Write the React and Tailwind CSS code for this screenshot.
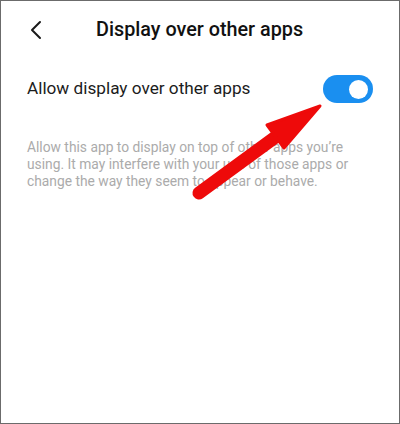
import React from "react";

export default function App() {
  return (
    <div
      className="relative w-[400px] h-[424px] bg-white border border-[#6b6b6b] overflow-hidden"
      style={{ fontFamily: "Roboto, 'Noto Sans', sans-serif" }}
    >
      <div className="flex items-center h-[58px] pl-[28px]">
        <svg width="14" height="20" viewBox="0 0 14 20" className="shrink-0">
          <path d="M11 2 L3 10 L11 18" fill="none" stroke="#1a1a1a" strokeWidth="2" strokeLinecap="round" strokeLinejoin="round" />
        </svg>
        <div className="ml-[53px] text-[19.8px] font-medium text-[#111]">Display over other apps</div>
      </div>
      <div className="flex items-center justify-between pl-[26px] pr-[26px] mt-[16px]">
        <div className="text-[17.2px] text-[#1c1c1c]">Allow display over other apps</div>
        <div className="w-[50px] h-[28px] rounded-full bg-[#1a8ff0] flex items-center justify-end pr-[5px]">
          <div className="w-[19px] h-[19px] rounded-full bg-white" />
        </div>
      </div>
      <div className="px-[26px] mt-[36px] text-[13.8px] leading-[17px] text-[#ababab]">
        Allow this app to display on top of other apps you’re using. It may interfere with your use of those apps or change the way they seem to appear or behave.
      </div>
      <svg className="absolute left-0 top-0 pointer-events-none" width="400" height="424">
        <line x1="198" y1="192" x2="280" y2="132" stroke="#ee0a0a" strokeWidth="13" strokeLinecap="round" />
        <polygon points="319,105 266,124 283,147" fill="#ee0a0a" stroke="#ee0a0a" strokeWidth="3" strokeLinejoin="round" />
      </svg>
    </div>
  );
}
